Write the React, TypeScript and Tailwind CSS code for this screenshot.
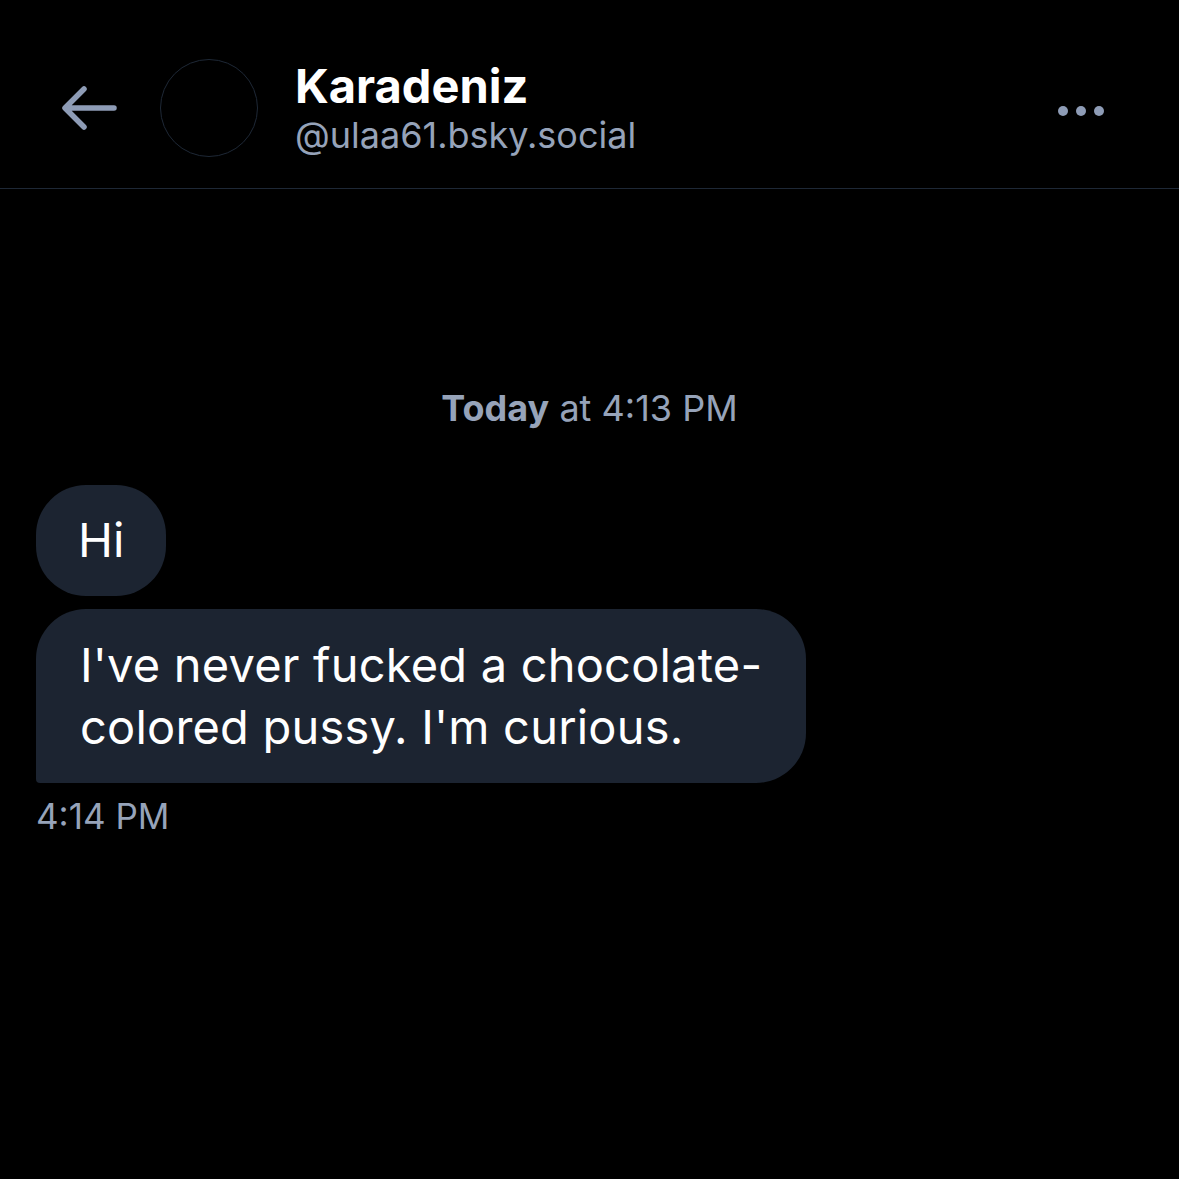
import React from "react";

const font = { fontFamily: "Inter, 'Noto Sans', sans-serif" };

function BackArrow() {
  return (
    <svg width="58" height="48" viewBox="0 0 58 48" fill="none" className="text-[#8e9cb6]">
      <path d="M54 24H6M24 5L5 24l19 19" stroke="currentColor" strokeWidth="5.5" strokeLinecap="round" strokeLinejoin="round" />
    </svg>
  );
}

function MoreDots() {
  return (
    <div className="mt-[5px] flex items-center gap-[8px]">
      <span className="block h-[10px] w-[10px] rounded-full bg-[#8e9cb6]" />
      <span className="block h-[10px] w-[10px] rounded-full bg-[#8e9cb6]" />
      <span className="block h-[10px] w-[10px] rounded-full bg-[#8e9cb6]" />
    </div>
  );
}

export default function App() {
  return (
    <div className="min-h-[1179px] w-[1179px] bg-black text-white" style={font}>
      <header className="flex h-[189px] items-center border-b border-[#1e2836] pl-[60px] pr-[75px] pt-[28px]">
        <BackArrow />
        <div className="ml-[42px] h-[98px] w-[98px] rounded-full border border-[#1e2836] bg-black" />
        <div className="ml-[37px] flex flex-1 flex-col">
          <span className="text-[47px] font-bold leading-[54px]">Karadeniz</span>
          <span className="text-[36px] leading-[44px] text-[#96a3b9]">@ulaa61.bsky.social</span>
        </div>
        <MoreDots />
      </header>

      <main className="flex flex-col px-[36px]">
        <p className="mt-[197px] text-center text-[36px] leading-[44px] text-[#96a3b9]">
          <span className="font-bold">Today</span> at 4:13 PM
        </p>

        <div className="mt-[55px] flex flex-col items-start gap-[13px]">
          <div className="rounded-[50px] bg-[#1c2431] px-[42px] pb-[25px] pt-[24px] text-[47px] leading-[62px]">Hi</div>
          <div className="w-[770px] whitespace-nowrap rounded-[50px] rounded-bl-[4px] bg-[#1c2431] px-[44px] pb-[25px] pt-[25px] text-[47px] leading-[62px] tracking-[0.2px]">
            I've never fucked a chocolate-
            <br />
            colored pussy. I'm curious.
          </div>
        </div>
        <p className="mt-[11px] text-[35px] leading-[44px] text-[#96a3b9]">4:14 PM</p>
      </main>
    </div>
  );
}
